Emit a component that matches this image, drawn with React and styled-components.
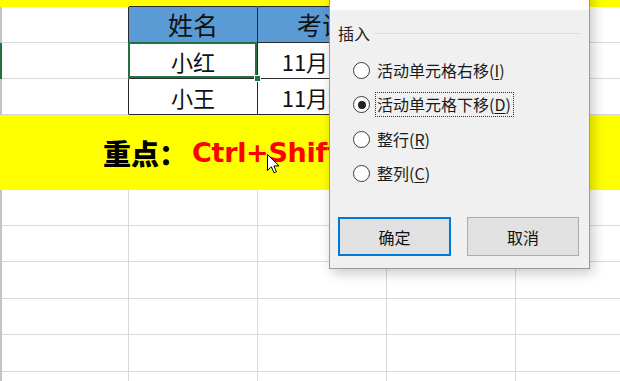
import React from 'react';
import styled, { createGlobalStyle } from 'styled-components';

const GRID = '#d9d9d9';
const INK = '#2a2a2a';
const YELLOW = '#ffff00';
const BLUE = '#5b9bd5';
const COLS = [127, 129, 129, 129, 129];

export default function App() {
  return (
    <>
      <GlobalStyle />
      <Sheet>
        <Rows>
          <Row $h={7}>
            <RowHead $bg={YELLOW} />
            <Cell $w={COLS[0]} $bg={YELLOW} $rc={YELLOW} $bc={YELLOW} />
            <Cell $w={COLS[1]} $bg={YELLOW} $rc={YELLOW} $bc={INK} />
            <Cell $w={COLS[2]} $bg={YELLOW} $rc={YELLOW} $bc={INK} />
            <Cell $w={COLS[3]} $bg={YELLOW} $rc={YELLOW} $bc={YELLOW} />
            <Cell $w={COLS[4]} $bg={YELLOW} $rc={YELLOW} $bc={YELLOW} />
          </Row>

          <Row $h={36}>
            <RowHead />
            <Cell $w={COLS[0]} $rc={INK} />
            <Cell $w={COLS[1]} $bg={BLUE} $rc={INK} $bc={INK} $fs={25}>姓名</Cell>
            <Cell $w={COLS[2]} $bg={BLUE} $rc={INK} $bc={INK} $fs={25}>考试</Cell>
            <Cell $w={COLS[3]} />
            <Cell $w={COLS[4]} />
          </Row>

          {[
            { name: '小红', date: '11月1日', active: true },
            { name: '小王', date: '11月2日' },
          ].map((r) => (
            <Row $h={36} key={r.name}>
              <RowHead $bg={r.active ? '#217346' : undefined} />
              <Cell $w={COLS[0]} $rc={INK} />
              <Cell $w={COLS[1]} $rc={INK} $bc={INK} $selected={r.active}>{r.name}</Cell>
              <Cell $w={COLS[2]} $rc={INK} $bc={INK}>{r.date}</Cell>
              <Cell $w={COLS[3]} />
              <Cell $w={COLS[4]} />
            </Row>
          ))}

          <Band>
            <strong>重点：</strong>
            <Keys>Ctrl+Shift+=</Keys>
          </Band>

          {[36, 36, 37, 36, 37, 20].map((h, i) => (
            <Row $h={h} key={i}>
              <RowHead />
              {COLS.map((w, j) => (
                <Cell $w={w} key={j} />
              ))}
            </Row>
          ))}
        </Rows>

        <Cursor width="13" height="20" viewBox="0 0 13 20">
          <path
            d="M0.5 0.5 L0.5 16.5 L4.4 12.8 L7 18.8 L9.4 17.8 L6.9 11.9 L12 11.9 Z"
            fill="#fff"
            stroke="#000"
            strokeWidth="1"
            strokeLinejoin="round"
          />
        </Cursor>

        <Dialog>
          <TitleBar />
          <Body>
            <GroupHead>
              <span>插入</span>
              <Rule />
            </GroupHead>
            <RadioList>
              <RadioRow>
                <Radio />
                <Label>活动单元格右移(<u>I</u>)</Label>
              </RadioRow>
              <RadioRow>
                <Radio $checked />
                <Label $focused>活动单元格下移(<u>D</u>)</Label>
              </RadioRow>
              <RadioRow>
                <Radio />
                <Label>整行(<u>R</u>)</Label>
              </RadioRow>
              <RadioRow>
                <Radio />
                <Label>整列(<u>C</u>)</Label>
              </RadioRow>
            </RadioList>
            <Buttons>
              <Button $primary $w={113}>确定</Button>
              <Button $w={112}>取消</Button>
            </Buttons>
          </Body>
        </Dialog>
      </Sheet>
    </>
  );
}

const GlobalStyle = createGlobalStyle`
  html, body {
    margin: 0;
    padding: 0;
    background: #fff;
    overflow: hidden;
  }
  body {
    font-family: "Noto Sans CJK SC", "Noto Sans", sans-serif;
  }
`;

const Sheet = styled.div`
  position: relative;
  width: 620px;
  height: 381px;
  overflow: hidden;
`;

const Rows = styled.div`
  display: flex;
  flex-direction: column;
`;

const Row = styled.div`
  display: flex;
  flex: none;
  height: ${(p) => p.$h}px;
`;

const RowHead = styled.div`
  flex: none;
  width: 2px;
  background: ${(p) => p.$bg || '#c4c4c4'};
`;

const Cell = styled.div`
  position: relative;
  box-sizing: border-box;
  flex: none;
  width: ${(p) => p.$w}px;
  display: flex;
  align-items: center;
  justify-content: center;
  background: ${(p) => p.$bg || '#fff'};
  border-right: 1px solid ${(p) => p.$rc || GRID};
  border-bottom: 1px solid ${(p) => p.$bc || GRID};
  font-size: ${(p) => p.$fs || 22}px;
  line-height: 1;
  color: #111;
  white-space: nowrap;

  ${(p) =>
    p.$selected &&
    `
    &::after {
      content: '';
      position: absolute;
      inset: -1px 0 0 -1px;
      border: 2px solid #217346;
      z-index: 2;
    }
    &::before {
      content: '';
      position: absolute;
      right: -3px;
      bottom: -3px;
      width: 5px;
      height: 5px;
      background: #217346;
      box-shadow: 0 0 0 1px #fff;
      z-index: 3;
    }
  `}
`;

const Band = styled.div`
  flex: none;
  height: 75px;
  display: flex;
  align-items: center;
  padding-left: 103px;
  background: ${YELLOW};
  font-size: 28px;
  font-weight: 700;
  color: #000;
  white-space: nowrap;
`;

const Keys = styled.span`
  margin-left: 5px;
  color: #ff0000;
  font-family: "DejaVu Sans", "Noto Sans", sans-serif;
  font-size: 27px;
  letter-spacing: -0.3px;
`;

const Cursor = styled.svg`
  position: absolute;
  left: 267px;
  top: 154px;
`;

const Dialog = styled.div`
  position: absolute;
  left: 329px;
  top: -20px;
  width: 261px;
  box-sizing: border-box;
  border: 1px solid #9a9a9a;
  background: #f0f0f0;
  box-shadow: 3px 4px 12px rgba(0, 0, 0, 0.22);
  color: #1a1a1a;
  font-size: 16px;
`;

const TitleBar = styled.div`
  height: 29px;
  background: #fff;
`;

const Body = styled.div`
  padding: 13px 9px 12px 8px;
`;

const GroupHead = styled.div`
  display: flex;
  align-items: center;
  gap: 5px;
  height: 20px;
  line-height: 20px;
`;

const Rule = styled.div`
  flex: 1;
  height: 1px;
  background: #dcdcdc;
`;

const RadioList = styled.div`
  display: flex;
  flex-direction: column;
  margin-top: 10px;
  padding-left: 15px;
`;

const RadioRow = styled.div`
  display: flex;
  align-items: center;
  gap: 5px;
  height: 34.5px;
`;

const Radio = styled.span`
  position: relative;
  flex: none;
  box-sizing: border-box;
  width: 17px;
  height: 17px;
  border-radius: 50%;
  border: 1px solid #3a3a3a;
  background: #fff;

  ${(p) =>
    p.$checked &&
    `
    &::after {
      content: '';
      position: absolute;
      inset: 3.5px;
      border-radius: 50%;
      background: #222;
    }
  `}
`;

const Label = styled.span`
  padding: 1px 2px 1px 1px;
  line-height: 21px;
  border: 1px dotted ${(p) => (p.$focused ? '#333' : 'transparent')};
  white-space: nowrap;

  u {
    text-underline-offset: 2px;
  }
`;

const Buttons = styled.div`
  display: flex;
  gap: 16px;
  margin-top: 26px;
`;

const Button = styled.div`
  box-sizing: border-box;
  width: ${(p) => p.$w}px;
  height: 39px;
  display: flex;
  align-items: center;
  justify-content: center;
  background: #e1e1e1;
  border: ${(p) => (p.$primary ? '2px solid #0078d7' : '1px solid #adadad')};
  font-size: 16px;
  color: #111;
`;
